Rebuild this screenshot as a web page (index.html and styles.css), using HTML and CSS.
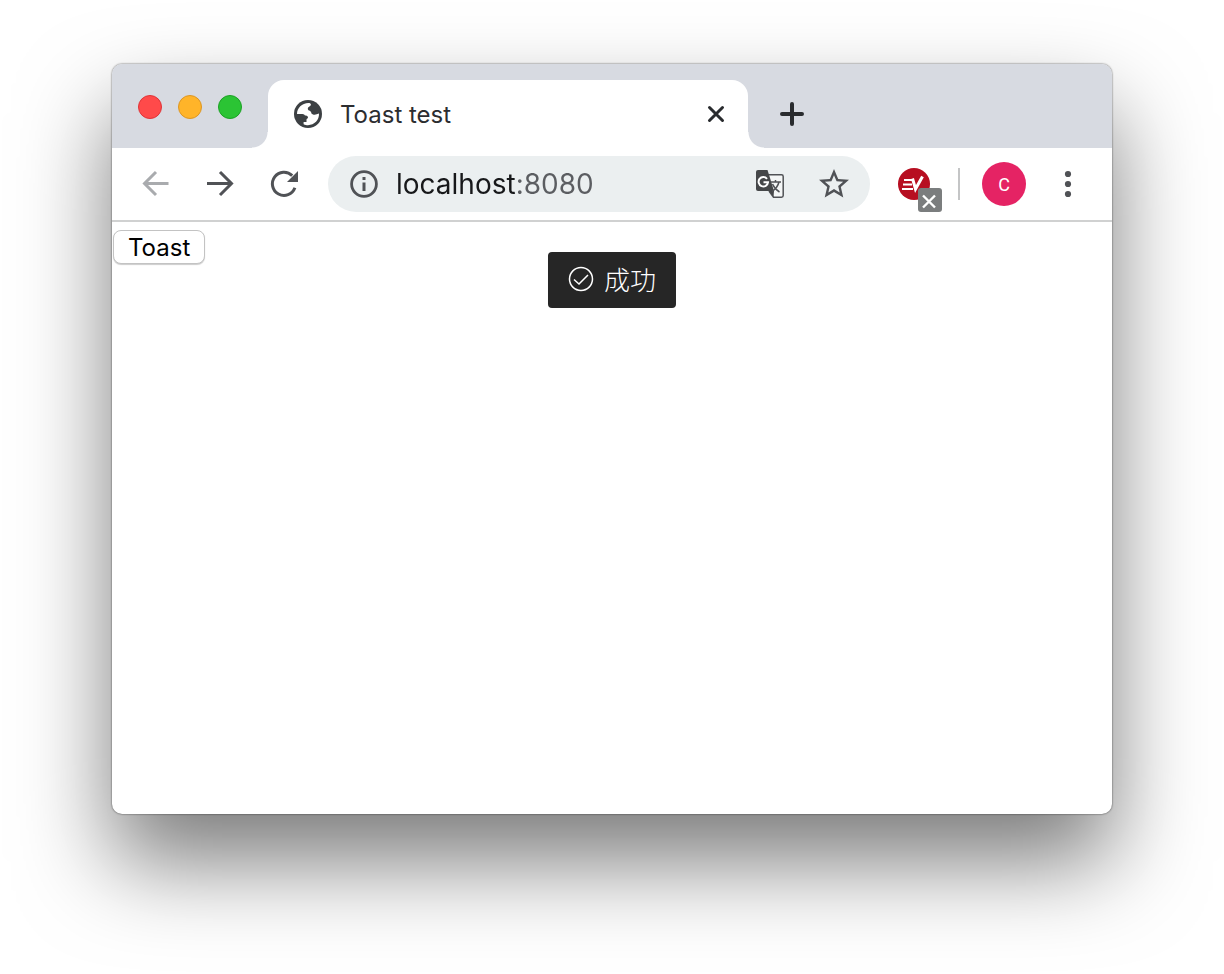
FILE: index.html
```html
<!DOCTYPE html>
<html lang="en">
<head>
<meta charset="utf-8">
<meta name="viewport" content="width=device-width, initial-scale=1">
<title>Toast test</title>
<link rel="stylesheet" href="styles.css">
</head>
<body>
<div class="window">
  <header class="tab-strip">
    <div class="traffic-lights">
      <button class="light light-close" aria-label="Close window"></button>
      <button class="light light-minimize" aria-label="Minimize window"></button>
      <button class="light light-zoom" aria-label="Zoom window"></button>
    </div>
    <div class="tab">
      <svg class="favicon" viewBox="0 0 28 28" aria-hidden="true">
        <circle cx="14" cy="14" r="14" fill="#3c4043"/>
        <path d="M3 14C3 8 8 3 14.500 3C17.500 3 17.600 5.600 15.400 6.400C13.600 7 13.400 9 14.400 10.200C16.600 10.400 17.200 12 17.400 13.200C18.400 15 21.500 15.200 25 13.600C25.400 20 20.400 25.200 14 25.200C12.500 25.200 11.200 25 9.600 24.200V22H12.500V19.500C12.500 18.500 14 18.800 14 17.500C14 16 12.500 15.600 11 15.600C10.400 14.200 9 14 7 14Z" fill="#fff"/>
      </svg>
      <span class="tab-title">Toast test</span>
      <button class="icon-button tab-close" aria-label="Close tab">
        <svg viewBox="0 0 20 20"><path d="M3.500 3.500L16.500 16.500M16.500 3.500L3.500 16.500" stroke="#292b2e" stroke-width="3" stroke-linecap="round"/></svg>
      </button>
    </div>
    <button class="icon-button new-tab" aria-label="New tab">
      <svg viewBox="0 0 24 24"><path d="M12 2V22M2 12H22" stroke="#292b2e" stroke-width="4" stroke-linecap="round"/></svg>
    </button>
  </header>
  <nav class="toolbar" aria-label="Browser toolbar">
    <div class="nav-buttons">
      <button class="icon-button" aria-label="Back" disabled>
        <svg viewBox="0 0 32 32"><path d="M28.500 15.500H4M16 4L4.500 15.500L16 27" fill="none" stroke="#a9abae" stroke-width="3"/></svg>
      </button>
      <button class="icon-button" aria-label="Forward">
        <svg viewBox="0 0 32 32"><path d="M3 15.500H28M16 4L27.500 15.500L16 27" fill="none" stroke="#505256" stroke-width="3"/></svg>
      </button>
      <button class="icon-button" aria-label="Reload">
        <svg viewBox="0 0 32 32"><path d="M24.200 7.600A11.600 11.600 0 1 0 26.900 19.800" fill="none" stroke="#505256" stroke-width="3"/><path d="M30 3V14H19Z" fill="#505256"/></svg>
      </button>
    </div>
    <div class="address-bar">
      <button class="icon-button" aria-label="Site information">
        <svg viewBox="0 0 28 28"><circle cx="14" cy="14" r="12.400" fill="none" stroke="#505256" stroke-width="2.800"/><path d="M12.500 7H15.500V10H12.500ZM12.500 12.500H15.500V21H12.500Z" fill="#505256"/></svg>
      </button>
      <input class="address" type="text" aria-label="Address" value="localhost:8080">
      <button class="icon-button" aria-label="Translate this page">
        <svg viewBox="0 0 28 28">
          <path d="M12 4.800H25.500Q27.200 4.800 27.200 6.500V25.500Q27.200 27.200 25.500 27.200H17.500L13 21" fill="#f4f6f6" stroke="#505256" stroke-width="1.500"/>
          <path d="M2 0H11.500L18 21H2Q0 21 0 19V2Q0 0 2 0Z" fill="#454749"/>
          <path d="M13 21H18L17.500 27Z" fill="#454749"/>
          <path d="M11 8.800A4.700 4.700 0 1 0 12 12.300H7.500" fill="none" stroke="#fff" stroke-width="2"/>
          <path d="M14.500 12H25M19.500 10V12M23 12C22 16 19 19.500 16 21.500M16.500 14C18 17.500 20 20 23.500 22" fill="none" stroke="#505256" stroke-width="1.500"/>
        </svg>
      </button>
      <button class="icon-button bookmark" aria-label="Bookmark this page">
        <svg viewBox="0 0 24 24"><path d="M22 9.240l-7.190-.620L12 2 9.190 8.630 2 9.240l5.460 4.730L5.820 21 12 17.270 18.180 21l-1.630-7.030L22 9.240zM12 15.400l-3.760 2.270 1-4.280-3.320-2.880 4.380-.380L12 6.100l1.710 4.040 4.380.380-3.320 2.880 1 4.280L12 15.400z" fill="#505256"/></svg>
      </button>
    </div>
    <button class="extension" aria-label="Extension">
      <svg viewBox="0 0 46 46">
        <circle cx="17" cy="16" r="16" fill="#b70e21"/>
        <path d="M7 12H16M6 16.500H15M5 21H16" stroke="#fff" stroke-width="2"/>
        <path d="M15.500 10.500L18.500 21L25.500 8.500" fill="none" stroke="#fff" stroke-width="3"/>
        <rect x="21" y="20" width="24" height="24" rx="3" fill="#7b7d7e"/>
        <path d="M26 27.500L38 39.500M38 27.500L26 39.500" stroke="#fff" stroke-width="2.400"/>
      </svg>
    </button>
    <span class="divider"></span>
    <button class="avatar" aria-label="Profile">C</button>
    <button class="icon-button menu" aria-label="Browser menu">
      <svg viewBox="0 0 8 28"><g fill="#505256"><circle cx="4" cy="4" r="3.100"/><circle cx="4" cy="14" r="3.100"/><circle cx="4" cy="24" r="3.100"/></g></svg>
    </button>
  </nav>
  <main class="page">
    <button class="toast-button">Toast</button>
    <div class="toast" role="status">
      <svg class="toast-icon" viewBox="0 0 26 26" aria-hidden="true"><circle cx="13" cy="13" r="11.500" fill="none" stroke="#fff" stroke-width="1.500"/><path d="M6 13.500L11 18L20 9" fill="none" stroke="#fff" stroke-width="1.500"/></svg>
      <span lang="zh">成功</span>
    </div>
  </main>
</div>
</body>
</html>
```
FILE: styles.css
```css
* { box-sizing: border-box; }

body {
  margin: 0;
  padding: 64px 112px 160px;
  background: #fff;
  color: #000;
  font-family: Inter, "Liberation Sans", sans-serif;
}

button {
  padding: 0;
  border: 0;
  background: none;
  color: inherit;
  font: inherit;
}

svg { display: block; }

.window {
  display: flex;
  flex-direction: column;
  min-height: calc(100vh - 224px);
  border-radius: 10px;
  background: #fff;
  box-shadow: 0 0 2px rgba(0, 0, 0, 0.7), 0 48px 92px rgba(0, 0, 0, 0.52);
}

.tab-strip {
  display: flex;
  align-items: flex-end;
  height: 84px;
  border-radius: 10px 10px 0 0;
  background: #d7dae1;
}

.traffic-lights {
  display: flex;
  align-self: center;
  gap: 16px;
  padding: 2px 26px 0;
}

.light {
  width: 24px;
  height: 24px;
  border: 1px solid;
  border-radius: 50%;
}

.light-close { background: #ff4a4a; border-color: #df3438; }
.light-minimize { background: #ffb429; border-color: #dc9624; }
.light-zoom { background: #2bc434; border-color: #1ca125; }

.tab {
  position: relative;
  display: flex;
  flex: 0 1 480px;
  align-items: center;
  height: 68px;
  padding: 0 22px 0 26px;
  border-radius: 16px 16px 0 0;
  background: #fff;
}

.tab::before,
.tab::after {
  position: absolute;
  bottom: 0;
  width: 16px;
  height: 16px;
  content: "";
}

.tab::before {
  right: 100%;
  background: radial-gradient(circle at 0 0, #d7dae1 15px, #fff 16px);
}

.tab::after {
  left: 100%;
  background: radial-gradient(circle at 100% 0, #d7dae1 15px, #fff 16px);
}

.favicon {
  width: 28px;
  height: 28px;
}

.tab-title {
  flex: 1;
  margin-left: 18px;
  color: #2c2d30;
  font-size: 24px;
}

.tab-close svg { width: 20px; height: 20px; }

.new-tab {
  display: grid;
  place-items: center;
  height: 68px;
  margin-left: 32px;
}

.new-tab svg { width: 24px; height: 24px; }

.toolbar {
  display: flex;
  align-items: center;
  height: 74px;
  padding: 0 40px 0 28px;
  border-bottom: 2px solid #d0d1d1;
}

.nav-buttons {
  display: flex;
  gap: 32px;
}

.nav-buttons svg { width: 32px; height: 32px; }

.address-bar {
  display: flex;
  flex: 1;
  align-items: center;
  min-width: 0;
  height: 56px;
  margin-left: 28px;
  padding: 0 19px 0 22px;
  border-radius: 28px;
  background: #ebeff0;
}

.address-bar svg { width: 28px; height: 28px; }

/* The host is drawn dark and the port after it in grey. */
.address {
  flex: 1;
  min-width: 0;
  margin: 0 16px 0 18px;
  padding: 0;
  border: 0;
  background: linear-gradient(to right, #17181a 120px, #5b5d61 120px);
  background-clip: text;
  color: #17181a;
  font: 28px/40px Inter, "Liberation Sans", sans-serif;
  -webkit-text-fill-color: transparent;
}

.bookmark { margin-left: 33px; }

.address-bar .bookmark svg {
  width: 36px;
  height: 36px;
  margin: 0 -1px;
}

.extension { margin: 14px 0 0 27px; }
.extension svg { width: 46px; height: 46px; }

.divider {
  width: 2px;
  height: 32px;
  margin-left: 15px;
  background: #c4c5c6;
}

.avatar {
  width: 44px;
  height: 44px;
  margin-left: 22px;
  border-radius: 50%;
  background: #e52364;
  color: #fff;
  font: 18px Roboto, "Liberation Sans", sans-serif;
}

.menu { margin-left: 38px; }
.menu svg { width: 8px; height: 28px; }

.page {
  display: flex;
  position: relative;
  flex: 1;
  align-items: flex-start;
  padding: 8px 1px;
}

.toast-button {
  height: 34px;
  padding: 1px 14px 0;
  border: 1px solid #c3c3c3;
  border-radius: 8px;
  background: #fff;
  box-shadow: 0 1px 1px rgba(0, 0, 0, 0.2);
  font-size: 24px;
}

.toast {
  display: flex;
  position: absolute;
  top: 30px;
  left: 50%;
  align-items: center;
  gap: 10px;
  height: 56px;
  padding: 0 20px 2px;
  border-radius: 4px;
  background: #262626;
  color: #fff;
  font: 300 26px/54px "Noto Sans CJK SC", sans-serif;
  transform: translateX(-50%);
}

.toast-icon {
  width: 26px;
  height: 26px;
}
```
